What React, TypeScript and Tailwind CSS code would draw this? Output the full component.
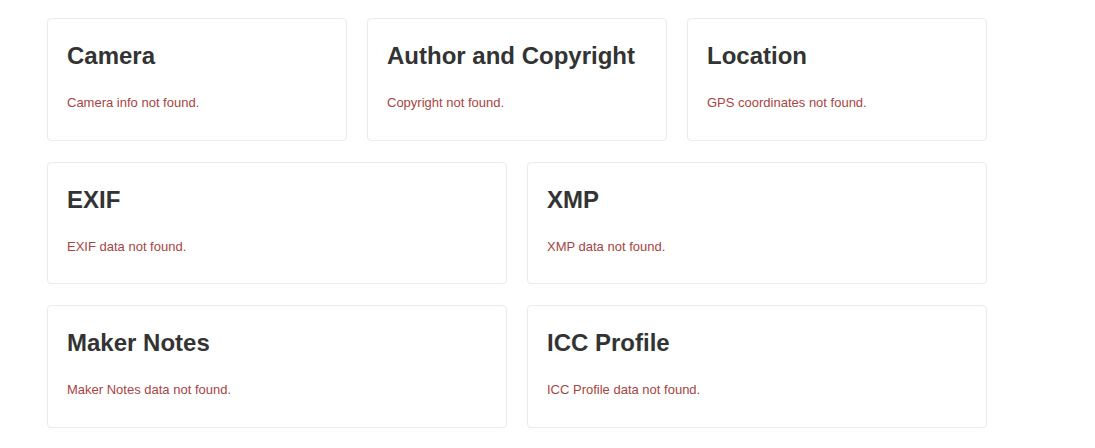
import React from "react";

function Card({ title, msg }: { title: string; msg: string }) {
  return (
    <div className="h-[122.5px] rounded-[4px] border border-[#ebebeb] bg-white px-[19px] pt-[24px]">
      <h3 className="mb-[24px] text-[24px] font-bold leading-[26px] text-[#333333]">{title}</h3>
      <p className="text-[13px] leading-[19px] text-[#a94442]">{msg}</p>
    </div>
  );
}

export default function App() {
  return (
    <div
      className="min-h-[448px] w-full bg-white pt-[18px]"
      style={{ fontFamily: '"Liberation Sans", Arial, sans-serif' }}
    >
      <div className="ml-[47px] flex w-[940px] flex-col gap-[21px]">
        <div className="grid grid-cols-3 gap-[20px]">
          <Card title="Camera" msg="Camera info not found." />
          <Card title="Author and Copyright" msg="Copyright not found." />
          <Card title="Location" msg="GPS coordinates not found." />
        </div>
        <div className="grid grid-cols-2 gap-[20px]">
          <Card title="EXIF" msg="EXIF data not found." />
          <Card title="XMP" msg="XMP data not found." />
        </div>
        <div className="grid grid-cols-2 gap-[20px]">
          <Card title="Maker Notes" msg="Maker Notes data not found." />
          <Card title="ICC Profile" msg="ICC Profile data not found." />
        </div>
      </div>
    </div>
  );
}
